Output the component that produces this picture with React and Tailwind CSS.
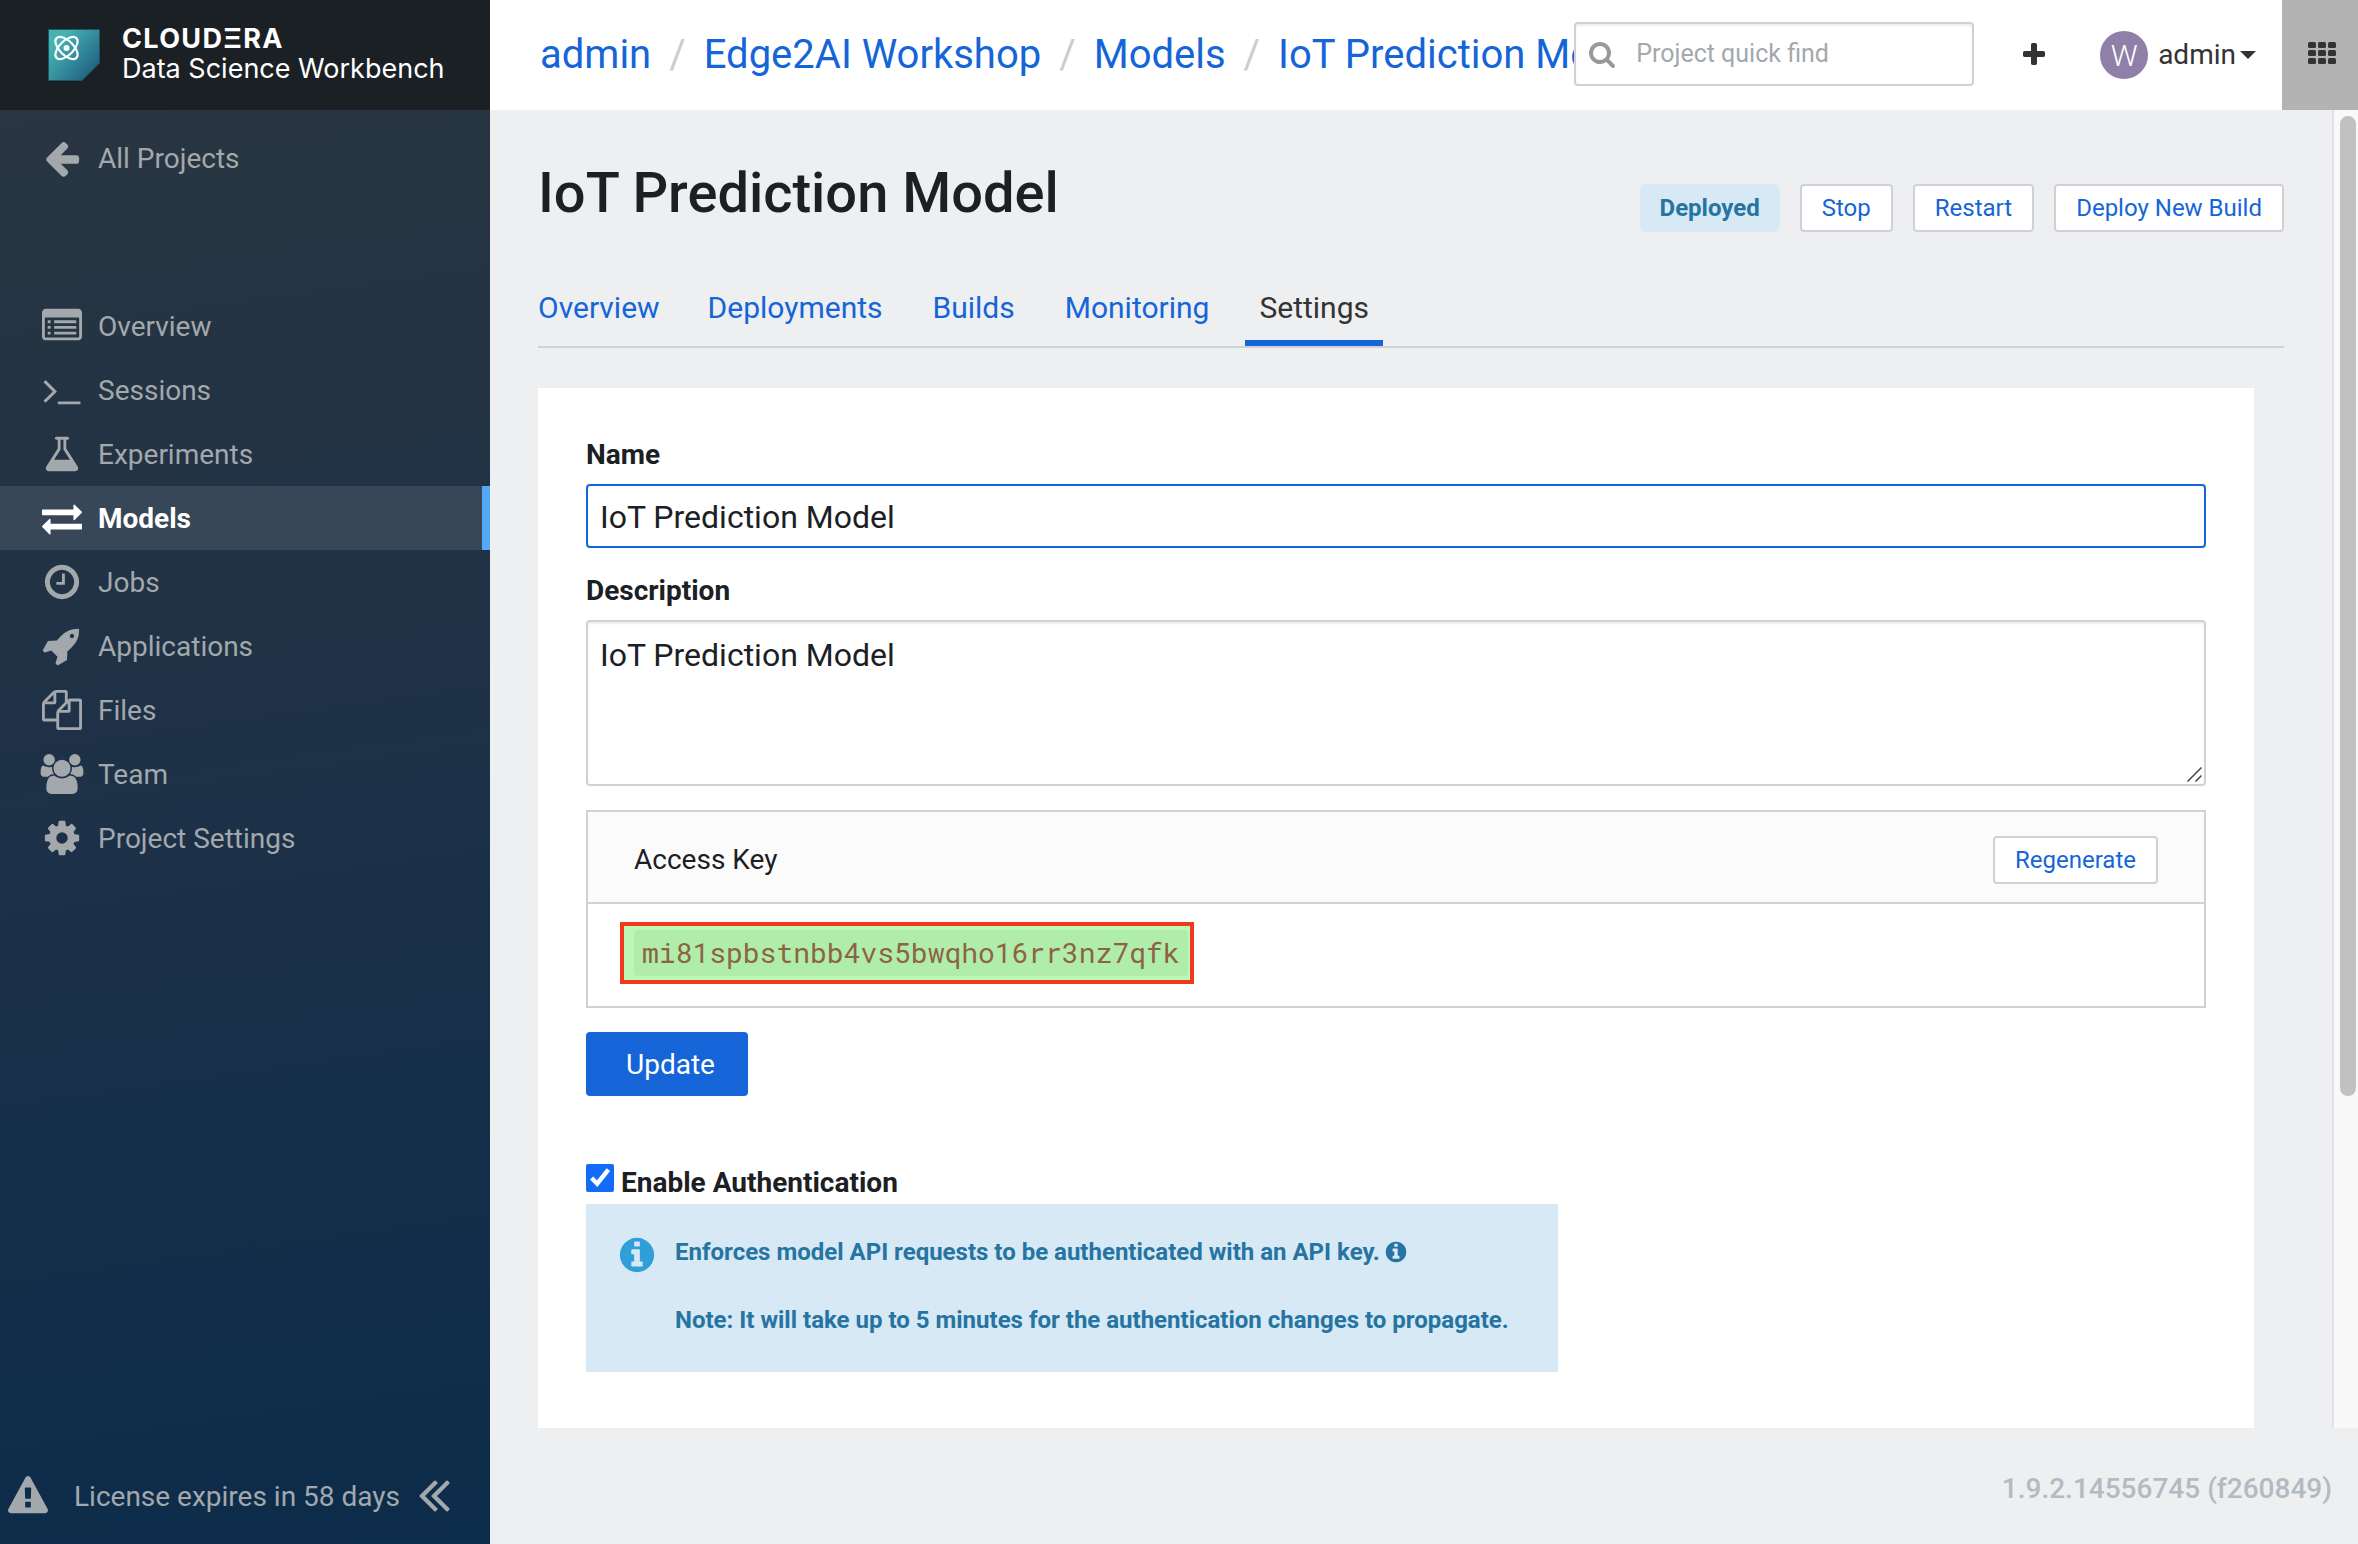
import React from "react";

const ICONS = {
  arrowLeft:
    "M1664 896v128q0 53-32.5 90.5t-84.5 37.5h-704l293 294q38 36 38 90t-38 90l-75 76q-37 37-90 37-52 0-91-37l-651-652q-37-37-37-90 0-52 37-91l651-650q38-38 91-38 52 0 90 38l75 74q38 38 38 91t-38 91l-293 293h704q52 0 84.5 37.5t32.5 90.5z",
  list: "M256 1152h128v128h-128zM256 896h128v128h-128zM256 640h128v128h-128zM544 1152h992v128h-992zM544 896h992v128h-992zM544 640h992v128h-992zM160 128h1472q66 0 113 47t47 113v1088q0 66-47 113t-113 47h-1472q-66 0-113-47t-47-113v-1088q0-66 47-113t113-47zM160 512q-32 0-32 32v832q0 32 32 32h1472q32 0 32-32v-832q0-32-32-32z",
  terminal:
    "M649 983l-466 466q-10 10-23 10t-23-10l-50-50q-10-10-10-23t10-23l393-393-393-393q-10-10-10-23t10-23l50-50q10-10 23-10t23 10l466 466q10 10 10 23t-10 23zm1079 457v64q0 14-9 23t-23 9h-960q-14 0-23-9t-9-23v-64q0-14 9-23t23-9h960q14 0 23 9t9 23z",
  flask:
    "M1591 1448q56 89 21.5 152.5t-140.5 63.5h-1152q-106 0-140.5-63.5t21.5-152.5l503-793v-399h-64q-26 0-45-19t-19-45 19-45 45-19h512q26 0 45 19t19 45-19 45-45 19h-64v399zm-779-725l-272 429h712l-272-429-20-31v-436h-128v436z",
  exchange:
    "M1792 1184v192q0 13-9.5 22.5t-22.5 9.5h-1376v192q0 13-9.5 22.5t-22.5 9.5q-12 0-24-10l-319-320q-9-9-9-22 0-14 9-23l320-320q9-9 23-9 13 0 22.5 9.5t9.5 22.5v192h1376q13 0 22.5 9.5t9.5 22.5zm0-544q0 14-9 23l-320 320q-9 9-23 9-13 0-22.5-9.5t-9.5-22.5v-192h-1376q-13 0-22.5-9.5t-9.5-22.5v-192q0-13 9.5-22.5t22.5-9.5h1376v-192q0-14 9-23t23-9q12 0 24 10l319 319q9 9 9 23z",
  clock:
    "M1024 544v448q0 14-9 23t-23 9h-320q-14 0-23-9t-9-23v-64q0-14 9-23t23-9h224v-352q0-14 9-23t23-9h64q14 0 23 9t9 23zm416 352q0-148-73-273t-198-198-273-73-273 73-198 198-73 273 73 273 198 198 273 73 273-73 198-198 73-273zm224 0q0 209-103 385.5t-279.5 279.5-385.5 103-385.5-103-279.5-279.5-103-385.5 103-385.5 279.5-279.5 385.5-103 385.5 103 279.5 279.5 103 385.5z",
  rocket:
    "M1440 448q0-40-28-68t-68-28-68 28-28 68 28 68 68 28 68-28 28-68zm224-288q0 249-75.5 430.5t-253.5 360.5q-81 80-195 176l-20 379q-2 16-16 26l-384 224q-7 4-16 4-12 0-23-9l-64-64q-13-14-8-32l85-276-281-281-276 85q-3 1-9 1-14 0-23-9l-64-64q-17-19-5-39l224-384q10-14 26-16l379-20q96-114 176-195 188-187 358-258t431-71q14 0 24 9.5t10 22.5z",
  files:
    "M1696 384q40 0 68 28t28 68v1216q0 40-28 68t-68 28h-960q-40 0-68-28t-28-68v-288h-544q-40 0-68-28t-28-68v-672q0-40 20-88t48-76l408-408q28-28 76-48t88-20h416q40 0 68 28t28 68v328q68-40 128-40h416zm-544 213l-299 299h299v-299zm-640-384l-299 299h299v-299zm196 647l316-316v-416h-384v416q0 40-28 68t-68 28h-416v640h512v-256q0-40 20-88t48-76zm956 804v-1152h-384v416q0 40-28 68t-68 28h-416v640h896z",
  users:
    "M529 896q-162 5-265 128h-134q-82 0-138-40.5t-56-118.5q0-353 124-353 6 0 43.5 21t97.5 42.5 119 21.5q67 0 133-23-5 37-5 66 0 139 81 256zm1071 637q0 120-73 189.5t-194 69.5h-874q-121 0-194-69.5t-73-189.5q0-53 3.5-103.5t14-109 26.5-108.5 43-97.5 62-81 85.5-53.5 111.5-20q10 0 43 21.5t73 48 107 48 135 21.5 135-21.5 107-48 73-48 43-21.5q61 0 111.5 20t85.5 53.5 62 81 43 97.5 26.5 108.5 14 109 3.5 103.5zm-1024-1277q0 106-75 181t-181 75-181-75-75-181 75-181 181-75 181 75 75 181zm704 384q0 159-112.5 271.5t-271.5 112.5-271.5-112.5-112.5-271.5 112.5-271.5 271.5-112.5 271.5 112.5 112.5 271.5zm576 225q0 78-56 118.5t-138 40.5h-134q-103-123-265-128 81-117 81-256 0-29-5-66 66 23 133 23 59 0 119-21.5t97.5-42.5 43.5-21q124 0 124 353zm-128-609q0 106-75 181t-181 75-181-75-75-181 75-181 181-75 181 75 75 181z",
  cog: "M1152 896q0-106-75-181t-181-75-181 75-75 181 75 181 181 75 181-75 75-181zm512-109v222q0 12-8 23t-20 13l-185 28q-19 54-39 91 35 50 107 138 10 12 10 25t-9 23q-27 37-99 108t-94 71q-12 0-26-9l-138-108q-44 23-91 38-16 136-29 186-7 28-36 28h-222q-14 0-24.5-8.5t-11.5-21.5l-28-184q-49-16-90-37l-141 107q-10 9-25 9-14 0-25-11-126-114-165-168-7-10-7-23 0-12 8-23 15-21 51-66.5t54-70.5q-27-50-41-99l-183-27q-13-2-21-12.5t-8-23.5v-222q0-12 8-23t19-13l186-28q14-46 39-92-40-57-107-138-10-12-10-24 0-10 9-23 26-36 98.5-107.5t94.5-71.5q13 0 26 10l138 107q44-23 91-38 16-136 29-186 7-28 36-28h222q14 0 24.5 8.5t11.5 21.5l28 184q49 16 90 37l142-107q9-9 24-9 13 0 25 10 129 119 165 170 7 8 7 22 0 12-8 23-15 21-51 66.5t-54 70.5q26 50 41 98l183 28q13 2 21 12.5t8 23.5z",
  warning:
    "M1024 1375v-190q0-14-9.5-23.5t-22.5-9.5h-192q-13 0-22.5 9.5t-9.5 23.5v190q0 14 9.5 23.5t22.5 9.5h192q13 0 22.5-9.5t9.5-23.5zm-2-374l18-459q0-12-10-19-13-11-24-11h-220q-11 0-24 11-10 7-10 21l17 457q0 10 10 16.5t24 6.5h185q14 0 23.5-6.5t10.5-16.5zm-14-934l768 1408q35 63-2 126-17 29-46.5 46t-63.5 17h-1536q-34 0-63.5-17t-46.5-46q-37-63-2-126l768-1408q17-31 47-49t65-18 65 18 47 49z",
  doubleLeft:
    "M1011 1376q0 13-10 23l-50 50q-10 10-23 10t-23-10l-466-466q-10-10-10-23t10-23l466-466q10-10 23-10t23 10l50 50q10 10 10 23t-10 23l-393 393 393 393q10 10 10 23zm384 0q0 13-10 23l-50 50q-10 10-23 10t-23-10l-466-466q-10-10-10-23t10-23l466-466q10-10 23-10t23 10l50 50q10 10 10 23t-10 23l-393 393 393 393q10 10 10 23z",
  search:
    "M1216 832q0-185-131.5-316.5t-316.5-131.5-316.5 131.5-131.5 316.5 131.5 316.5 316.5 131.5 316.5-131.5 131.5-316.5zm512 832q0 52-38 90t-90 38q-54 0-90-38l-343-342q-179 124-399 124-143 0-273.5-55.5t-225-150-150-225-55.5-273.5 55.5-273.5 150-225 225-150 273.5-55.5 273.5 55.5 225 150 150 225 55.5 273.5q0 220-124 399l343 343q37 37 37 90z",
  plus: "M1600 736v192q0 40-28 68t-68 28h-416v416q0 40-28 68t-68 28h-192q-40 0-68-28t-28-68v-416h-416q-40 0-68-28t-28-68v-192q0-40 28-68t68-28h416v-416q0-40 28-68t68-28h192q40 0 68 28t28 68v416h416q40 0 68 28t28 68z",
  info: "M1152 1376v-160q0-14-9-23t-23-9h-96v-512q0-14-9-23t-23-9h-320q-14 0-23 9t-9 23v160q0 14 9 23t23 9h96v320h-96q-14 0-23 9t-9 23v160q0 14 9 23t23 9h448q14 0 23-9t9-23zm-128-896v-160q0-14-9-23t-23-9h-192q-14 0-23 9t-9 23v160q0 14 9 23t23 9h192q14 0 23-9t9-23zm640 416q0 209-103 385.5t-279.5 279.5-385.5 103-385.5-103-279.5-279.5-103-385.5 103-385.5 279.5-279.5 385.5-103 385.5 103 279.5 279.5 103 385.5z",
};

function Icon({ name, className = "" }) {
  return (
    <svg
      viewBox="0 0 1792 1792"
      fill="currentColor"
      fillRule={name === "list" ? "evenodd" : "nonzero"}
      overflow="visible"
      aria-hidden="true"
      className={`shrink-0 ${className}`}
    >
      <path d={ICONS[name]} />
    </svg>
  );
}

const NAV = [
  { icon: "list", label: "Overview" },
  { icon: "terminal", label: "Sessions" },
  { icon: "flask", label: "Experiments" },
  { icon: "exchange", label: "Models", active: true },
  { icon: "clock", label: "Jobs" },
  { icon: "rocket", label: "Applications" },
  { icon: "files", label: "Files" },
  { icon: "users", label: "Team" },
  { icon: "cog", label: "Project Settings" },
];

const CRUMBS = ["admin", "Edge2AI Workshop", "Models", "IoT Prediction Model"];

const TABS = ["Overview", "Deployments", "Builds", "Monitoring", "Settings"];

function Logo() {
  return (
    <svg viewBox="0 0 52 52" className="h-[52px] w-[52px] shrink-0" aria-hidden="true">
      <defs>
        <linearGradient id="logo-fill" x1="0.2" y1="0.2" x2="0.95" y2="0.85">
          <stop offset="0" stopColor="#46b3b3" />
          <stop offset="1" stopColor="#1f5d80" />
        </linearGradient>
      </defs>
      <path d="M0.5 0.5H51.5V34L34 51.5H0.5Z" fill="url(#logo-fill)" stroke="#1d5663" />
      <g fill="none" stroke="#fff" strokeWidth="2.2">
        <ellipse cx="18.5" cy="19" rx="14" ry="7" transform="rotate(45 18.5 19)" />
        <ellipse cx="18.5" cy="19" rx="14" ry="7" transform="rotate(-45 18.5 19)" />
      </g>
      <circle cx="18.5" cy="19" r="3" fill="#fff" />
    </svg>
  );
}

function Sidebar() {
  return (
    <aside className="flex w-[490px] shrink-0 flex-col bg-linear-[172deg,#2b3640,#1d3147_50%,#0c2c4b] text-[28px] leading-10 text-[#a3a8ac]">
      <a href="#home" className="flex h-[110px] shrink-0 items-center gap-[22px] bg-[#1b2024] pl-12 text-white">
        <Logo />
        <span className="flex flex-col">
          <span className="font-['Inter'] text-[27px] leading-7 font-bold tracking-wider">CLOUDΞRA</span>
          <span className="font-['Inter'] text-[27px] leading-8">Data Science Workbench</span>
        </span>
      </a>
      <a href="#projects" className="mt-4 flex h-16 shrink-0 items-center gap-4 pl-[42px]">
        <Icon name="arrowLeft" className="h-10 w-10" />
        <span className="pt-[2px]">All Projects</span>
      </a>
      <nav className="mt-[104px] flex flex-col">
        {NAV.map((item) => (
          <a
            key={item.label}
            href={`#${item.icon}`}
            aria-current={item.active ? "page" : undefined}
            className={
              item.active
                ? "flex h-16 items-center gap-4 border-r-8 border-[#55a8f8] bg-white/10 pl-[42px] font-bold text-white"
                : "flex h-16 items-center gap-4 pl-[42px]"
            }
          >
            <Icon name={item.icon} className="h-10 w-10" />
            <span className="pt-[2px]">{item.label}</span>
          </a>
        ))}
      </nav>
      <div className="mt-auto flex h-24 items-center pl-2">
        <Icon name="warning" className="h-10 w-10" />
        <span className="ml-[26px] pt-[2px]">License expires in 58 days</span>
        <button type="button" aria-label="Collapse sidebar" className="ml-[6px] pb-1">
          <Icon name="doubleLeft" className="h-[56px] w-[56px]" />
        </button>
      </div>
    </aside>
  );
}

function Header() {
  return (
    <header className="flex h-[110px] shrink-0 items-center bg-white text-[#333]">
      <nav aria-label="Breadcrumb" className="min-w-0 flex-1 overflow-hidden pl-[50px] text-[40px] leading-[48px] whitespace-nowrap">
        {CRUMBS.map((crumb, i) => (
          <React.Fragment key={crumb}>
            {i > 0 && <span className="px-[18px] text-[#cccccc]">/</span>}
            <a href={`#crumb-${i}`} className="text-[#1565d8]">
              {crumb}
            </a>
          </React.Fragment>
        ))}
      </nav>
      <label className="mb-[2px] flex h-16 w-[400px] shrink-0 items-center gap-5 rounded border-2 border-[#d0d1d6] bg-white pl-3 shadow-[inset_0_2px_2px_rgba(0,0,0,0.07)]">
        <Icon name="search" className="h-7 w-7 text-[#999]" />
        <input
          type="search"
          aria-label="Project quick find"
          placeholder="Project quick find"
          className="min-w-0 flex-1 bg-transparent text-[25px] leading-10 outline-none placeholder:text-[#a3a8ac]"
        />
      </label>
      <button type="button" aria-label="New" className="ml-[46px]">
        <Icon name="plus" className="h-7 w-7" />
      </button>
      <button type="button" className="ml-[52px] flex items-center">
        <span className="mr-[10px] flex h-12 w-12 items-center justify-center rounded-full bg-[#8e80a9] text-[30px] font-light text-white">
          W
        </span>
        <span className="text-[28px] leading-10">admin</span>
        <svg viewBox="0 0 16 8" className="ml-1 h-2 w-4" aria-hidden="true">
          <path d="M0 0H16L8 8Z" fill="#333" />
        </svg>
      </button>
      <button type="button" aria-label="Apps" className="ml-[26px] flex h-full w-[76px] items-center justify-center bg-[#b3b3b3] pb-1 pl-1">
        <svg viewBox="0 0 28 22" className="h-[22px] w-7" fill="#333" aria-hidden="true">
          {[0, 8, 16].map((y) =>
            [0, 10, 20].map((x) => <rect key={`${x}-${y}`} x={x} y={y} width="8" height="6" rx="1.5" />)
          )}
        </svg>
      </button>
    </header>
  );
}

function SmallButton({ children }) {
  return (
    <button
      type="button"
      className="h-12 rounded border-2 border-[#d0d1d6] bg-white px-5 text-2xl leading-10 text-[#1565d8]"
    >
      {children}
    </button>
  );
}

const LABEL = "text-[28px] leading-[42px] font-bold";
const FIELD = "block w-full rounded border-2 bg-white px-3 text-[32px] leading-10 outline-none";

function SettingsCard() {
  return (
    <form className="mt-10 mr-[30px] flex flex-1 flex-col bg-white px-12 pt-[46px]">
      <label htmlFor="model-name" className={LABEL}>
        Name
      </label>
      <input id="model-name" defaultValue="IoT Prediction Model" className={`${FIELD} mt-2 h-16 border-[#1565d8] pt-[2px]`} />

      <label htmlFor="model-description" className={`${LABEL} mt-[22px]`}>
        Description
      </label>
      <div className="relative mt-2">
        <textarea
          id="model-description"
          defaultValue="IoT Prediction Model"
          className={`${FIELD} h-[166px] resize-none border-[#d0d1d6] pt-[13px] shadow-[inset_0_2px_2px_rgba(0,0,0,0.07)]`}
        />
        <svg viewBox="0 0 15 15" className="absolute right-1 bottom-1 h-[15px] w-[15px]" aria-hidden="true">
          <path d="M0.5 14.5L14.5 0.5M8.5 14.5L14.5 8.5" stroke="#444" strokeWidth="1.5" />
        </svg>
      </div>

      <section className="mt-6 border-2 border-[#d0d1d6]">
        <div className="flex h-[92px] items-center justify-between border-b-2 border-[#d0d1d6] bg-[#fbfbfb] px-[46px] pt-[6px]">
          <h2 className="text-[28px] leading-10">Access Key</h2>
          <SmallButton>Regenerate</SmallButton>
        </div>
        <div className="flex h-[102px] items-start px-8 pt-[18px]">
          <div className="border-4 border-[#ef3a1e] bg-[#bbf8b6] py-1 pr-[2px] pl-[10px]">
            <code className="block rounded bg-[#b0edaa] px-2 font-['Roboto_Mono','Liberation_Mono',monospace] text-[28px] leading-[46px] text-[#8d6343]">
              mi81spbstnbb4vs5bwqho16rr3nz7qfk
            </code>
          </div>
        </div>
      </section>

      <button
        type="submit"
        className="mt-6 h-16 self-start rounded bg-[#1565d8] pt-[2px] pr-[33px] pl-10 text-[28px] leading-10 text-white"
      >
        Update
      </button>

      <label className={`${LABEL} mt-[66px] flex items-start gap-[7px]`}>
        <input type="checkbox" defaultChecked className="mt-[2px] h-7 w-7 accent-[#136cf9]" />
        Enable Authentication
      </label>
      <div className="flex w-[972px] gap-[18px] self-start bg-[#d6e9f5] pt-[31px] pr-10 pb-[35px] pl-[31px] text-2xl leading-[34px] font-bold text-[#2574a1]">
        <Icon name="info" className="h-10 w-10 text-[#2f9ed9]" />
        <div>
          <p className="flex items-center gap-1">
            Enforces model API requests to be authenticated with an API key.
            <Icon name="info" className="h-6 w-6" />
          </p>
          <p className="mt-[34px]">Note: It will take up to 5 minutes for the authentication changes to propagate.</p>
        </div>
      </div>
    </form>
  );
}

export default function App() {
  return (
    <div className="flex h-screen bg-[#eeeff1] font-['Roboto',sans-serif] text-[#1b2024]">
      <Sidebar />
      <div className="flex min-w-0 flex-1 flex-col">
        <Header />
        <div className="flex min-h-0 flex-1">
          <main className="flex min-w-0 flex-1 flex-col overflow-hidden px-12 pt-[50px]">
            <div className="flex h-[72px] shrink-0 justify-between">
              <h1 className="text-[56px] leading-[66px] font-medium">IoT Prediction Model</h1>
              <div className="flex items-center gap-5 self-end">
                <span className="h-12 rounded-md bg-[#d6e9f5] px-5 text-2xl leading-[48px] font-bold text-[#2574a1]">Deployed</span>
                <SmallButton>Stop</SmallButton>
                <SmallButton>Restart</SmallButton>
                <SmallButton>Deploy New Build</SmallButton>
              </div>
            </div>
            <nav className="mt-[56px] flex gap-[22px] border-b-2 border-[#d0d1d3] text-[30px] leading-10">
              {TABS.map((tab, i) => (
                <a
                  key={tab}
                  href={`#tab-${i}`}
                  className={
                    tab === "Settings"
                      ? "border-b-[6px] border-[#1565d8] px-[14px] pb-3 text-[#333]"
                      : i === 0
                        ? "pr-3 pb-3 text-[#1565d8]"
                        : "px-[14px] pb-3 text-[#1565d8]"
                  }
                >
                  {tab}
                </a>
              ))}
            </nav>
            <SettingsCard />
          </main>
          <div className="flex w-[26px] shrink-0 justify-center border-l-2 border-[#e2e2e4] bg-[#f9f9f9] pt-[6px] pl-1">
            <div className="h-[74.7%] w-4 rounded-full bg-[#c1c1c1]" />
          </div>
        </div>
        <footer className="flex h-[116px] shrink-0 items-center justify-end px-[26px] pt-[6px] text-[28px] leading-10 font-medium text-[#b2bac2]">
          1.9.2.14556745 (f260849)
        </footer>
      </div>
    </div>
  );
}
